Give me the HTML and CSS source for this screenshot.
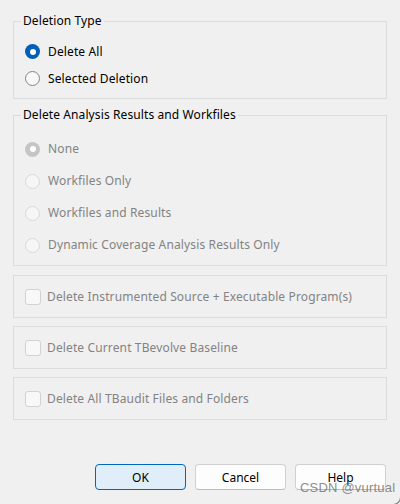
FILE: index.html
```html
<!DOCTYPE html>
<html>
<head>
<meta charset="utf-8">
<link rel="stylesheet" href="styles.css">
</head>
<body>
<div class="dialog">
  <fieldset class="group group-type">
    <legend>Deletion Type</legend>
    <label class="opt"><input type="radio" name="type" class="radio" checked><span>Delete All</span></label>
    <label class="opt"><input type="radio" name="type" class="radio"><span>Selected Deletion</span></label>
  </fieldset>

  <fieldset class="group group-analysis">
    <legend>Delete Analysis Results and Workfiles</legend>
    <label class="opt disabled"><input type="radio" name="ana" class="radio" checked disabled><span>None</span></label>
    <label class="opt disabled"><input type="radio" name="ana" class="radio" disabled><span>Workfiles Only</span></label>
    <label class="opt disabled"><input type="radio" name="ana" class="radio" disabled><span>Workfiles and Results</span></label>
    <label class="opt disabled"><input type="radio" name="ana" class="radio" disabled><span>Dynamic Coverage Analysis Results Only</span></label>
  </fieldset>

  <div class="check-box">
    <label class="opt disabled"><input type="checkbox" class="check" disabled><span>Delete Instrumented Source + Executable Program(s)</span></label>
  </div>
  <div class="check-box">
    <label class="opt disabled"><input type="checkbox" class="check" disabled><span>Delete Current TBevolve Baseline</span></label>
  </div>
  <div class="check-box">
    <label class="opt disabled"><input type="checkbox" class="check" disabled><span>Delete All TBaudit Files and Folders</span></label>
  </div>

  <div class="buttons">
    <button class="btn btn-default">OK</button>
    <button class="btn">Cancel</button>
    <button class="btn">Help</button>
  </div>

  <div class="watermark">CSDN @vurtual</div>
  <div class="corner"></div>
</div>
</body>
</html>
```
FILE: styles.css
```css
html, body {
  margin: 0;
  padding: 0;
}
body {
  background: #f0f0f0;
  font-family: "Noto Sans", "Open Sans", sans-serif;
  font-size: 12px;
  color: #000;
}
.dialog {
  position: relative;
  box-sizing: border-box;
  width: 400px;
  height: 504px;
  padding: 13px 13px 0 13px;
  display: flex;
  flex-direction: column;
  overflow: hidden;
}
.group {
  margin: 0;
  border: 1px solid #dcdcdc;
  padding: 9px 0 6px 7px;
  min-width: 0;
}
.group legend {
  padding: 0 2px;
  line-height: 16px;
  height: 16px;
  color: #000;
  letter-spacing: 0.1px;
}
.group-analysis {
  margin-top: 8px;
  padding-top: 10px;
  padding-bottom: 4px;
}
.opt {
  display: flex;
  align-items: center;
  height: 27px;
  color: #000;
}
.group-analysis .opt {
  height: 32px;
}
.opt span {
  line-height: 16px;
  letter-spacing: 0.13px;
}
.opt.disabled {
  color: #838383;
}
.radio {
  appearance: none;
  -webkit-appearance: none;
  box-sizing: border-box;
  width: 15px;
  height: 15px;
  margin: 0 8px 0 4px;
  border-radius: 50%;
  border: 1px solid #858585;
  background: #f8f8f8;
  position: relative;
  flex: none;
}
.radio:checked {
  border: none;
  background: #005fb8;
}
.radio:checked::after {
  content: "";
  position: absolute;
  left: 4.5px;
  top: 4.5px;
  width: 6px;
  height: 6px;
  border-radius: 50%;
  background: #fff;
}
.radio:disabled {
  border-color: #d9d9d9;
  background: #f6f6f6;
}
.radio:disabled:checked {
  border: none;
  background: #c5c5c5;
}
.check-box {
  box-sizing: border-box;
  height: 43px;
  border: 1px solid #dcdcdc;
  padding-left: 11px;
  margin-top: 8px;
  display: flex;
  align-items: center;
}
.group-analysis + .check-box {
  margin-top: 9px;
}
.check-box .opt {
  height: auto;
}
.check {
  appearance: none;
  -webkit-appearance: none;
  box-sizing: border-box;
  width: 16px;
  height: 16px;
  margin: 0 6px 0 0;
  border-radius: 3px;
  border: 1px solid #d2d2d2;
  background: #f8f8f8;
  flex: none;
}
.buttons {
  margin-top: 44px;
  margin-right: 1px;
  display: flex;
  justify-content: flex-end;
  gap: 9px;
}
.btn {
  box-sizing: border-box;
  width: 91px;
  height: 26px;
  border-radius: 4px;
  border: 1px solid #d0d0d0;
  border-bottom-color: #bdbdbd;
  background: #fdfdfd;
  font-family: "Noto Sans", "Open Sans", sans-serif;
  font-size: 12px;
  color: #000;
  padding: 0;
}
.btn-default {
  background: #e0eef9;
  border: 1px solid #0067c0;
}
.watermark {
  position: absolute;
  left: 300px;
  top: 480px;
  font-family: "Liberation Sans", Arial, sans-serif;
  font-size: 13px;
  color: rgba(110, 110, 110, 0.8);
  letter-spacing: 0.2px;
}
.corner {
  position: absolute;
  right: -1px;
  bottom: -1px;
  width: 8px;
  height: 10px;
  border-right: 1px solid #7a7a7a;
  border-bottom: 1px solid #7a7a7a;
  border-bottom-right-radius: 8px;
}
```
